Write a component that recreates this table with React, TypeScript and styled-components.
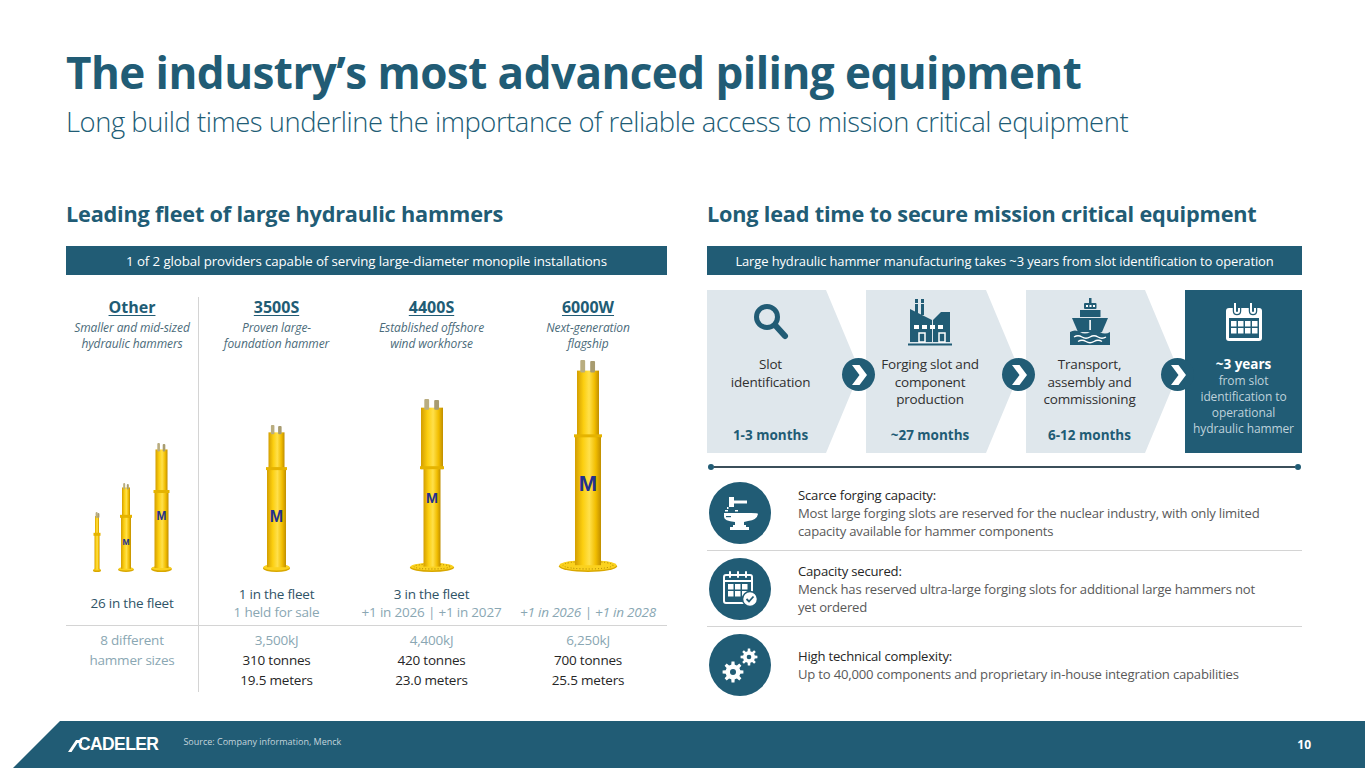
import React, { useId } from "react";
import styled, { createGlobalStyle } from "styled-components";

const TEAL = "#215c75";
const LIGHT = "#dfe7ec";
const MUTE = "#8aa7b3";
const BODY = "#595959";
const DARK = "#262626";

const Global = createGlobalStyle`
  html, body { margin: 0; padding: 0; background: #fff; }
  body { font-family: "Open Sans", "Noto Sans", sans-serif; }
  #root { width: 1365px; height: 768px; }
`;

const Page = styled.div`
  width: 1365px;
  height: 768px;
  overflow: hidden;
  display: flex;
  flex-direction: column;
  background: #fff;
  color: ${DARK};
`;

const Header = styled.header`
  padding: 45px 0 0 66px;
`;

const Title = styled.h1`
  margin: 0;
  font-size: 44px;
  line-height: 54px;
  font-weight: 700;
  letter-spacing: -0.55px;
  color: ${TEAL};
`;

const Subtitle = styled.p`
  margin: 6px 0 0;
  font-size: 27.4px;
  line-height: 34px;
  font-weight: 300;
  letter-spacing: -0.45px;
  color: ${TEAL};
`;

const Main = styled.main`
  display: grid;
  grid-template-columns: 601px 595px;
  column-gap: 40px;
  padding: 61px 0 0 66px;
`;

const Column = styled.section`
  display: flex;
  flex-direction: column;
`;

const SectionTitle = styled.h2`
  margin: 0;
  font-size: 21.7px;
  line-height: 28px;
  font-weight: 700;
  letter-spacing: -0.2px;
  color: ${TEAL};
`;

const Banner = styled.div<{ $size: number }>`
  margin-top: 18px;
  height: 29px;
  background: ${TEAL};
  color: #fff;
  font-size: ${(p) => p.$size}px;
  font-weight: 400;
  display: flex;
  align-items: center;
  justify-content: center;
  letter-spacing: -0.1px;
`;

/* ---------- Fleet grid ---------- */

const FleetGrid = styled.div`
  margin-top: 22px;
  display: grid;
  grid-template-columns: 133px 155px 155px 158px;
  grid-template-rows: 55px 232px 42px 66px;
`;

const Cell = styled.div<{ $sep?: boolean; $line?: boolean }>`
  display: flex;
  flex-direction: column;
  align-items: center;
  text-align: center;
  border-right: ${(p) => (p.$sep ? "1px solid #d4d4d4" : "none")};
  border-bottom: ${(p) => (p.$line ? "1px solid #d4d4d4" : "none")};
`;

const ModelName = styled.div`
  font-size: 16px;
  line-height: 20px;
  font-weight: 700;
  color: ${TEAL};
  text-decoration: underline;
  text-underline-offset: 2px;
  text-decoration-thickness: 1px;
`;

const ModelDesc = styled.div`
  margin-top: 3px;
  font-size: 12px;
  line-height: 16px;
  font-style: italic;
  color: #4b6b7a;
  letter-spacing: -0.1px;
`;

const ImageCell = styled(Cell)`
  flex-direction: row;
  justify-content: center;
  align-items: flex-end;
  gap: 15px;
  padding-bottom: 12px;
  box-sizing: border-box;
`;

const FleetCell = styled(Cell)`
  justify-content: center;
  padding-bottom: 4px;
  box-sizing: border-box;
`;

const FleetLine = styled.div<{ $muted?: boolean; $italic?: boolean }>`
  font-size: 13.5px;
  line-height: 18px;
  color: ${(p) => (p.$muted ? MUTE : "#2f5467")};
  font-style: ${(p) => (p.$italic ? "italic" : "normal")};
  letter-spacing: -0.2px;
  white-space: nowrap;
`;

const StatCell = styled(Cell)`
  padding-top: 4px;
`;

const StatLine = styled.div<{ $muted?: boolean }>`
  font-size: 13.5px;
  line-height: 20px;
  color: ${(p) => (p.$muted ? MUTE : DARK)};
  letter-spacing: -0.2px;
`;

/* ---------- Hammer drawing ---------- */

type HammerProps = {
  h: number;
  body: number;
  top: number;
  flange: number;
  disc?: boolean;
  logo?: boolean;
  split?: number;
  logoY?: number;
};

function Hammer({ h, body, top, flange, disc, logo = true, split = 0.38, logoY = 0.64 }: HammerProps) {
  const id = useId().replace(/[:«»]/g, "");
  const w = Math.max(flange, body, top) + 2;
  const cx = w / 2;
  const fh = disc ? Math.max(5, flange * 0.2) : Math.max(3, flange * 0.28);
  const bodyTop = h * split;
  const topStart = Math.max(4, h * 0.05);
  const g = `url(#g${id})`;
  return (
    <svg width={w} height={h} viewBox={`0 0 ${w} ${h}`}>
      <defs>
        <linearGradient id={`g${id}`} x1="0" x2="1" y1="0" y2="0">
          <stop offset="0" stopColor="#d39e00" />
          <stop offset="0.3" stopColor="#fccf10" />
          <stop offset="0.55" stopColor="#ffe04a" />
          <stop offset="0.8" stopColor="#f1bd00" />
          <stop offset="1" stopColor="#c08e00" />
        </linearGradient>
      </defs>
      <ellipse cx={cx} cy={h - fh / 2} rx={flange / 2} ry={fh / 2} fill="#d9a800" />
      <ellipse cx={cx} cy={h - fh / 2 - 1} rx={flange / 2 - 0.5} ry={fh / 2 - 0.6} fill="#fbd21e" />
      {disc && (
        <ellipse
          cx={cx}
          cy={h - fh / 2 - 1}
          rx={flange / 2 - 4}
          ry={fh / 2 - 2}
          fill="none"
          stroke="#a07800"
          strokeWidth="0.9"
          strokeDasharray="1 2"
        />
      )}
      <rect x={cx - body / 2} y={bodyTop} width={body} height={h - fh / 2 - bodyTop - 1} fill={g} />
      <rect x={cx - top / 2} y={topStart} width={top} height={bodyTop - topStart + 1} fill={g} />
      <rect x={cx - Math.max(top, body) / 2 - 1} y={bodyTop - 2} width={Math.max(top, body) + 2} height={3} fill="#e5b300" />
      <rect x={cx - top * 0.35} y={0} width={Math.max(2, top * 0.22)} height={topStart + 2} rx="1" fill="#b9ad80" />
      <rect x={cx + top * 0.1} y={1} width={Math.max(2, top * 0.22)} height={topStart + 1} rx="1" fill="#a89c70" />
      {logo && (
        <text
          x={cx}
          y={h * logoY}
          textAnchor="middle"
          fontSize={body * 0.85}
          fontWeight={900}
          fill="#22308f"
          fontFamily="Liberation Sans, Arial, sans-serif"
        >
          M
        </text>
      )}
    </svg>
  );
}

/* ---------- Process chevrons ---------- */

const ProcessRow = styled.div`
  margin-top: 15px;
  height: 163px;
  display: flex;
  gap: 6px;
`;

const Step = styled.div<{ $w?: number; $dark?: boolean; $z: number }>`
  position: relative;
  z-index: ${(p) => p.$z};
  flex: ${(p) => (p.$w ? `0 0 ${p.$w}px` : "1 1 auto")};
  display: flex;
  flex-direction: column;
  align-items: center;
  text-align: center;
  box-sizing: border-box;
  padding: 10px ${(p) => (p.$dark ? "0" : "26px")} 9px 0;
  background: ${(p) => (p.$dark ? TEAL : "transparent")};
  &::before {
    content: "";
    display: ${(p) => (p.$dark ? "none" : "block")};
    position: absolute;
    inset: 0;
    z-index: -1;
    background: ${LIGHT};
    clip-path: polygon(0 0, calc(100% - 34px) 0, 100% 50%, calc(100% - 34px) 100%, 0 100%);
  }
`;

const StepIcon = styled.div`
  height: 44px;
  display: flex;
  align-items: center;
  justify-content: center;
`;

const StepText = styled.div`
  margin-top: 12px;
  font-size: 13.5px;
  line-height: 17.5px;
  color: #303030;
  letter-spacing: -0.2px;
`;

const StepTime = styled.div`
  margin-top: auto;
  font-size: 13.5px;
  line-height: 18px;
  font-weight: 700;
  color: ${TEAL};
`;

const YearsTitle = styled.div`
  margin-top: 11px;
  font-size: 13.5px;
  line-height: 18px;
  font-weight: 700;
  color: #fff;
`;

const YearsText = styled.div`
  font-size: 12px;
  line-height: 16px;
  color: #bfd2db;
  letter-spacing: -0.1px;
`;

const Badge = styled.div`
  position: absolute;
  right: -15px;
  top: 68px;
  width: 33px;
  height: 33px;
  border-radius: 50%;
  background: ${TEAL};
  display: flex;
  align-items: center;
  justify-content: center;
`;

/* ---------- Timeline + list ---------- */

const Timeline = styled.div`
  margin-top: 10px;
  display: flex;
  align-items: center;
  height: 8px;
  padding: 0 1px;
`;

const Dot = styled.span`
  width: 6px;
  height: 6px;
  border-radius: 50%;
  background: ${TEAL};
  flex: none;
`;

const Rule = styled.span`
  flex: 1;
  height: 2px;
  background: #3b4f5a;
`;

const List = styled.div`
  margin-top: 4px;
  display: flex;
  flex-direction: column;
`;

const Item = styled.div<{ $last?: boolean }>`
  height: 75px;
  display: grid;
  grid-template-columns: 62px 472px;
  column-gap: 27px;
  align-items: center;
  padding-left: 2px;
  border-bottom: ${(p) => (p.$last ? "none" : "1px solid #d4d4d4")};
`;

const IconCircle = styled.div`
  width: 62px;
  height: 62px;
  border-radius: 50%;
  background: ${TEAL};
  display: flex;
  align-items: center;
  justify-content: center;
`;

const ItemTitle = styled.div`
  font-size: 13.1px;
  line-height: 18px;
  color: ${DARK};
  letter-spacing: -0.2px;
`;

const ItemBody = styled.div`
  font-size: 13.1px;
  line-height: 18px;
  color: ${BODY};
  letter-spacing: -0.2px;
`;

/* ---------- Footer ---------- */

const Footer = styled.footer`
  margin-top: auto;
  margin-left: 13px;
  height: 47px;
  background: ${TEAL};
  clip-path: polygon(47px 0, 100% 0, 100% 100%, 0 100%);
  border-top-left-radius: 8px;
  display: flex;
  align-items: center;
  padding: 0 54px 0 55px;
  box-sizing: border-box;
  color: #fff;
`;

const Logo = styled.div`
  display: flex;
  align-items: center;
`;

const LogoText = styled.span`
  font-family: "Liberation Sans", Arial, sans-serif;
  font-size: 17.5px;
  font-weight: 700;
  letter-spacing: -0.6px;
  margin-left: -4px;
`;

const Source = styled.span`
  margin-left: 25px;
  margin-top: -6px;
  font-size: 9px;
  color: #c3d4dc;
`;

const PageNum = styled.span`
  margin-left: auto;
  font-size: 12px;
  font-weight: 700;
`;

/* ---------- Icons ---------- */

function gearPath(cx: number, cy: number, ro: number, ri: number, teeth: number) {
  const pts: string[] = [];
  const step = (Math.PI * 2) / teeth;
  for (let i = 0; i < teeth; i++) {
    const a = i * step;
    const angs: [number, number][] = [
      [a - step * 0.3, ri],
      [a - step * 0.18, ro],
      [a + step * 0.18, ro],
      [a + step * 0.3, ri],
    ];
    for (const [an, r] of angs) {
      pts.push(`${(cx + Math.cos(an) * r).toFixed(2)},${(cy + Math.sin(an) * r).toFixed(2)}`);
    }
  }
  return `M${pts.join(" L")} Z`;
}

const Magnifier = () => (
  <svg width="40" height="40" viewBox="0 0 40 40">
    <circle cx="16" cy="15" r="10.5" fill="none" stroke={TEAL} strokeWidth="5" />
    <line x1="24" y1="23" x2="34" y2="34" stroke={TEAL} strokeWidth="6" strokeLinecap="round" />
  </svg>
);

const Factory = () => (
  <svg width="44" height="48" viewBox="0 0 44 48">
    <rect x="7" y="1" width="3" height="4" fill={TEAL} />
    <rect x="7" y="6" width="3" height="9" fill={TEAL} />
    <rect x="13" y="1" width="3" height="4" fill={TEAL} />
    <rect x="13" y="6" width="3" height="11" fill={TEAL} />
    <path d="M2 11 L24 22 L24 44 L2 44 Z" fill={TEAL} />
    <path d="M25 22 L33 14 L42 14 L42 44 L25 44 Z" fill={TEAL} />
    <rect x="6" y="27" width="5" height="4" fill="#fff" />
    <rect x="14" y="27" width="5" height="4" fill="#fff" />
    <rect x="22" y="27" width="5" height="4" fill="#fff" />
    <rect x="30" y="27" width="5" height="4" fill="#fff" />
    <rect x="11" y="35" width="6" height="9" fill="none" stroke="#fff" strokeWidth="1.5" />
    <rect x="31" y="35" width="6" height="9" fill="none" stroke="#fff" strokeWidth="1.5" />
    <rect x="0" y="45.5" width="44" height="2" fill={TEAL} />
  </svg>
);

const Ship = () => (
  <svg width="44" height="48" viewBox="0 0 44 48">
    <rect x="21" y="0" width="2.5" height="5" fill={TEAL} />
    <rect x="16" y="5" width="12.5" height="6" rx="1" fill={TEAL} />
    <rect x="12" y="12" width="20.5" height="7" fill={TEAL} />
    <rect x="18" y="7" width="2" height="2" fill="#fff" />
    <rect x="21.5" y="7" width="2" height="2" fill="#fff" />
    <rect x="25" y="7" width="2" height="2" fill="#fff" />
    <path d="M4 20 L40 20 L34 34 L10 34 Z" fill={TEAL} />
    <rect x="21.3" y="22" width="1.6" height="10" fill="#fff" />
    <path d="M2 34 Q7 31 12 34 T22 34 T32 34 T42 34 L42 47 L2 47 Z" fill={TEAL} />
    <path d="M6 39 Q10 36.5 14 39 T22 39 T30 39 T38 39" fill="none" stroke="#fff" strokeWidth="1.4" />
    <path d="M10 43.5 Q14 41 18 43.5 T26 43.5 T34 43.5" fill="none" stroke="#fff" strokeWidth="1.4" />
  </svg>
);

const CalendarWhite = () => (
  <svg width="42" height="42" viewBox="0 0 42 42">
    <rect x="3" y="7" width="36" height="33" rx="3" fill="#fff" />
    <rect x="6" y="17" width="30" height="20" fill={TEAL} />
    {[0, 1].map((r) =>
      [0, 1, 2, 3].map((c) => (
        <rect key={`${r}-${c}`} x={8 + c * 7} y={20 + r * 7} width="5.5" height="5.5" fill="#fff" />
      ))
    )}
    <path d="M12 2 L12 10 Q12 12 14 12 Q16 12 16 10 L16 7" fill="none" stroke={TEAL} strokeWidth="4.5" />
    <path d="M28 2 L28 10 Q28 12 30 12 Q32 12 32 10 L32 7" fill="none" stroke={TEAL} strokeWidth="4.5" />
    <path d="M12 2 L12 10 Q12 12 14 12 Q16 12 16 10 L16 7" fill="none" stroke="#fff" strokeWidth="2" />
    <path d="M28 2 L28 10 Q28 12 30 12 Q32 12 32 10 L32 7" fill="none" stroke="#fff" strokeWidth="2" />
  </svg>
);

const ChevronWhite = () => (
  <svg width="18" height="22" viewBox="0 0 18 22">
    <path d="M2 1 L9.5 1 L17 11 L9.5 21 L2 21 L9.5 11 Z" fill="#fff" />
  </svg>
);

const AnvilIcon = () => (
  <svg width="40" height="40" viewBox="0 0 40 40">
    <rect x="9" y="4" width="5" height="10" fill="#fff" />
    <rect x="14" y="7.5" width="13" height="3" fill="#fff" />
    <rect x="5" y="17" width="3" height="1.5" fill="#fff" />
    <rect x="15" y="17" width="3" height="1.5" fill="#fff" />
    <rect x="7" y="14" width="1.5" height="2" fill="#fff" />
    <path
      d="M4 20 L31 20 Q38 20 38 21 Q37 27 28 28 L24 29 L24 32 L26 32 L26 34 L29 34 L29 37 L10 37 L10 34 L13 34 L13 32 L15 32 L15 29 Q4 28 4 24 Z"
      fill="#fff"
    />
    <rect x="6" y="23" width="5" height="1.2" fill={TEAL} />
  </svg>
);

const CalendarCheck = () => (
  <svg width="40" height="40" viewBox="0 0 40 40">
    <rect x="4" y="6" width="28" height="28" rx="2" fill="none" stroke="#fff" strokeWidth="2" />
    <line x1="4" y1="12" x2="32" y2="12" stroke="#fff" strokeWidth="2" />
    {[10, 18, 26].map((x) => (
      <line key={x} x1={x} y1="3" x2={x} y2="8" stroke="#fff" strokeWidth="2" strokeLinecap="round" />
    ))}
    {[0, 1].map((r) =>
      [0, 1, 2].map((c) => (
        <rect key={`${r}-${c}`} x={8 + c * 7} y={15 + r * 7} width="5.5" height="5.5" fill="#fff" />
      ))
    )}
    <circle cx="30" cy="30" r="7.5" fill="#fff" stroke={TEAL} strokeWidth="1.5" />
    <path d="M26.5 30 L29 32.5 L33.5 27.5" fill="none" stroke={TEAL} strokeWidth="1.8" />
  </svg>
);

const Gears = () => (
  <svg width="42" height="42" viewBox="0 0 42 42">
    <path d={gearPath(14, 28, 10.5, 7.5, 8)} fill="#fff" />
    <circle cx="14" cy="28" r="5.5" fill="#fff" />
    <circle cx="14" cy="28" r="3" fill={TEAL} />
    <path d={gearPath(30, 13, 8.5, 6, 8)} fill="#fff" />
    <circle cx="30" cy="13" r="4.5" fill="#fff" />
    <circle cx="30" cy="13" r="2.3" fill={TEAL} />
  </svg>
);

const LogoMark = () => (
  <svg width="14" height="16" viewBox="0 0 14 16">
    <path d="M0 15 L8 3 L14 3 L14 6 L9.5 6 L3.5 15 Z" fill="#fff" />
  </svg>
);

/* ---------- App ---------- */

export default function App() {
  return (
    <Page>
      <Global />
      <Header>
        <Title>The industry’s most advanced piling equipment</Title>
        <Subtitle>Long build times underline the importance of reliable access to mission critical equipment</Subtitle>
      </Header>

      <Main>
        <Column>
          <SectionTitle>Leading fleet of large hydraulic hammers</SectionTitle>
          <Banner $size={13.3}>1 of 2 global providers capable of serving large-diameter monopile installations</Banner>
          <FleetGrid>
            <Cell $sep>
              <ModelName>Other</ModelName>
              <ModelDesc>
                Smaller and mid-sized
                <br />
                hydraulic hammers
              </ModelDesc>
            </Cell>
            <Cell>
              <ModelName>3500S</ModelName>
              <ModelDesc>
                Proven large-
                <br />
                foundation hammer
              </ModelDesc>
            </Cell>
            <Cell>
              <ModelName>4400S</ModelName>
              <ModelDesc>
                Established offshore
                <br />
                wind workhorse
              </ModelDesc>
            </Cell>
            <Cell>
              <ModelName>6000W</ModelName>
              <ModelDesc>
                Next-generation
                <br />
                flagship
              </ModelDesc>
            </Cell>

            <ImageCell $sep>
              <Hammer h={60} body={5} top={4} flange={8} logo={false} />
              <Hammer h={89} body={10} top={8} flange={16} logoY={0.7} />
              <Hammer h={129} body={14} top={12} flange={21} logoY={0.6} />
            </ImageCell>
            <ImageCell>
              <Hammer h={147} body={19} top={16} flange={27} split={0.3} logoY={0.66} />
            </ImageCell>
            <ImageCell>
              <Hammer h={173} body={17} top={22} flange={44} disc split={0.4} logoY={0.6} />
            </ImageCell>
            <ImageCell>
              <Hammer h={212} body={26} top={22} flange={58} disc split={0.36} logoY={0.62} />
            </ImageCell>

            <FleetCell $sep $line>
              <FleetLine>26 in the fleet</FleetLine>
            </FleetCell>
            <FleetCell $line>
              <FleetLine>1 in the fleet</FleetLine>
              <FleetLine $muted>1 held for sale</FleetLine>
            </FleetCell>
            <FleetCell $line>
              <FleetLine>3 in the fleet</FleetLine>
              <FleetLine $muted>+1 in 2026 | +1 in 2027</FleetLine>
            </FleetCell>
            <FleetCell $line>
              <FleetLine>&nbsp;</FleetLine>
              <FleetLine $muted $italic>
                +1 in 2026 | +1 in 2028
              </FleetLine>
            </FleetCell>

            <StatCell $sep>
              <StatLine $muted>8 different</StatLine>
              <StatLine $muted>hammer sizes</StatLine>
            </StatCell>
            <StatCell>
              <StatLine $muted>3,500kJ</StatLine>
              <StatLine>310 tonnes</StatLine>
              <StatLine>19.5 meters</StatLine>
            </StatCell>
            <StatCell>
              <StatLine $muted>4,400kJ</StatLine>
              <StatLine>420 tonnes</StatLine>
              <StatLine>23.0 meters</StatLine>
            </StatCell>
            <StatCell>
              <StatLine $muted>6,250kJ</StatLine>
              <StatLine>700 tonnes</StatLine>
              <StatLine>25.5 meters</StatLine>
            </StatCell>
          </FleetGrid>
        </Column>

        <Column>
          <SectionTitle>Long lead time to secure mission critical equipment</SectionTitle>
          <Banner $size={12.95}>Large hydraulic hammer manufacturing takes ~3 years from slot identification to operation</Banner>
          <ProcessRow>
            <Step $w={153} $z={4}>
              <StepIcon>
                <Magnifier />
              </StepIcon>
              <StepText>
                Slot
                <br />
                identification
              </StepText>
              <StepTime>1-3 months</StepTime>
              <Badge>
                <ChevronWhite />
              </Badge>
            </Step>
            <Step $w={154} $z={3}>
              <StepIcon>
                <Factory />
              </StepIcon>
              <StepText>
                Forging slot and
                <br />
                component
                <br />
                production
              </StepText>
              <StepTime>~27 months</StepTime>
              <Badge>
                <ChevronWhite />
              </Badge>
            </Step>
            <Step $w={153} $z={2}>
              <StepIcon>
                <Ship />
              </StepIcon>
              <StepText>
                Transport,
                <br />
                assembly and
                <br />
                commissioning
              </StepText>
              <StepTime>6-12 months</StepTime>
              <Badge>
                <ChevronWhite />
              </Badge>
            </Step>
            <Step $dark $z={1}>
              <StepIcon>
                <CalendarWhite />
              </StepIcon>
              <YearsTitle>~3 years</YearsTitle>
              <YearsText>
                from slot
                <br />
                identification to
                <br />
                operational
                <br />
                hydraulic hammer
              </YearsText>
            </Step>
          </ProcessRow>

          <Timeline>
            <Dot />
            <Rule />
            <Dot />
          </Timeline>

          <List>
            <Item>
              <IconCircle>
                <AnvilIcon />
              </IconCircle>
              <div>
                <ItemTitle>Scarce forging capacity:</ItemTitle>
                <ItemBody>
                  Most large forging slots are reserved for the nuclear industry, with only limited capacity available
                  for hammer components
                </ItemBody>
              </div>
            </Item>
            <Item>
              <IconCircle>
                <CalendarCheck />
              </IconCircle>
              <div>
                <ItemTitle>Capacity secured:</ItemTitle>
                <ItemBody>Menck has reserved ultra-large forging slots for additional large hammers not yet ordered</ItemBody>
              </div>
            </Item>
            <Item $last>
              <IconCircle>
                <Gears />
              </IconCircle>
              <div>
                <ItemTitle>High technical complexity:</ItemTitle>
                <ItemBody>Up to 40,000 components and proprietary in-house integration capabilities</ItemBody>
              </div>
            </Item>
          </List>
        </Column>
      </Main>

      <Footer>
        <Logo>
          <LogoMark />
          <LogoText>CADELER</LogoText>
        </Logo>
        <Source>Source: Company information, Menck</Source>
        <PageNum>10</PageNum>
      </Footer>
    </Page>
  );
}
